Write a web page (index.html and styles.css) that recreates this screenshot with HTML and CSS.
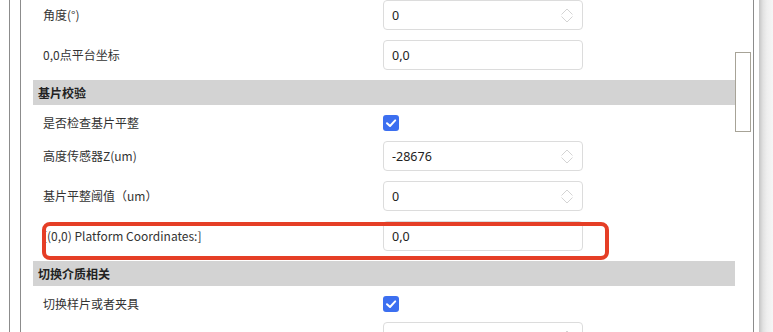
FILE: index.html
```html
<!DOCTYPE html>
<html lang="zh">
<head>
<meta charset="utf-8">
<link rel="stylesheet" href="styles.css">
</head>
<body>
<div class="window">
  <div class="gutter"></div>
  <div class="vline"></div>
  <div class="gap10"></div>
  <div class="vline"></div>
  <div class="pane">
    <div class="list">
      <div class="row">
        <div class="label">角度(°)</div>
        <div class="field"><span class="val">0</span><svg class="spin" width="12" height="15" viewBox="0 0 12 15"><polyline points="0.5,6.5 6,1 11.5,6.5"/><polyline points="0.5,8.5 6,14 11.5,8.5"/></svg></div>
      </div>
      <div class="row">
        <div class="label">0,0点平台坐标</div>
        <div class="field"><span class="val">0,0</span></div>
      </div>
      <div class="header">基片校验</div>
      <div class="row row-check">
        <div class="label">是否检查基片平整</div>
        <div class="check"><svg width="16" height="16" viewBox="0 0 16 16"><polyline points="4,8.2 7,11 12.2,5.4"/></svg></div>
      </div>
      <div class="row">
        <div class="label">高度传感器Z(um)</div>
        <div class="field"><span class="val">-28676</span><svg class="spin" width="12" height="15" viewBox="0 0 12 15"><polyline points="0.5,6.5 6,1 11.5,6.5"/><polyline points="0.5,8.5 6,14 11.5,8.5"/></svg></div>
      </div>
      <div class="row">
        <div class="label">基片平整阈值（um）</div>
        <div class="field"><span class="val">0</span><svg class="spin" width="12" height="15" viewBox="0 0 12 15"><polyline points="0.5,6.5 6,1 11.5,6.5"/><polyline points="0.5,8.5 6,14 11.5,8.5"/></svg></div>
      </div>
      <div class="row row-mark">
        <div class="label">[(0,0) Platform Coordinates:]</div>
        <div class="field"><span class="val">0,0</span></div>
        <div class="highlight"></div>
      </div>
      <div class="header">切换介质相关</div>
      <div class="row row-check">
        <div class="label">切换样片或者夹具</div>
        <div class="check"><svg width="16" height="16" viewBox="0 0 16 16"><polyline points="4,8.2 7,11 12.2,5.4"/></svg></div>
      </div>
      <div class="row">
        <div class="label"></div>
        <div class="field"><span class="val"></span><svg class="spin" width="12" height="15" viewBox="0 0 12 15"><polyline points="0.5,6.5 6,1 11.5,6.5"/><polyline points="0.5,8.5 6,14 11.5,8.5"/></svg></div>
      </div>
    </div>
  </div>
  <div class="scroll"><div class="thumb"></div></div>
  <div class="gap2"></div>
  <div class="vline"></div>
  <div class="gap5"></div>
  <div class="shadow"></div>
</div>
</body>
</html>
```
FILE: styles.css
```css
html, body {
  margin: 0;
  padding: 0;
  background: #ffffff;
}
body {
  width: 773px;
  height: 332px;
  overflow: hidden;
  font-family: "Noto Sans CJK SC", "Noto Sans", sans-serif;
  font-size: 12px;
  color: #333333;
}
.window {
  display: flex;
  height: 332px;
}
.gutter { flex: 0 0 9px; }
.vline { flex: 0 0 1px; background: #8c8c8c; }
.gap10 { flex: 0 0 10px; }
.gap2 { flex: 0 0 2px; }
.gap5 { flex: 0 0 5px; }
.pane {
  flex: 0 0 714px;
  box-sizing: border-box;
  padding-left: 12px;
  overflow: hidden;
}
.list {
  display: flex;
  flex-direction: column;
  gap: 10px;
}
.row {
  display: flex;
  align-items: center;
  height: 30px;
  flex: 0 0 auto;
}
.row-check { height: 16px; }
.row-mark { position: relative; }
.label {
  flex: 0 0 350px;
  box-sizing: border-box;
  padding-left: 10px;
  line-height: 16px;
  color: #333333;
  white-space: nowrap;
}
.field {
  flex: 0 0 200px;
  box-sizing: border-box;
  height: 30px;
  border: 1px solid #dcdcdc;
  border-radius: 4px;
  display: flex;
  align-items: center;
  justify-content: space-between;
  padding: 0 9px 0 8px;
  background: #fff;
}
.val {
  font-family: "Noto Sans", sans-serif;
  font-size: 12.5px;
  color: #222;
}
.spin {
  fill: none;
  stroke: #d4d4d4;
  stroke-width: 1;
}
.check {
  width: 16px;
  height: 16px;
  border-radius: 3px;
  background: #3c6ff0;
}
.check svg {
  display: block;
  fill: none;
  stroke: #ffffff;
  stroke-width: 2;
  stroke-linecap: round;
  stroke-linejoin: round;
}
.header {
  height: 25px;
  flex: 0 0 25px;
  background: #d3d3d3;
  font-weight: bold;
  color: #222;
  padding-left: 5px;
  display: flex;
  align-items: center;
}
.highlight {
  position: absolute;
  left: 9px;
  top: 1px;
  width: 567px;
  height: 38px;
  box-sizing: border-box;
  border: 4px solid #e53e26;
  border-radius: 8px;
  pointer-events: none;
}
.scroll {
  flex: 0 0 16px;
  padding-top: 52px;
  box-sizing: border-box;
}
.thumb {
  width: 16px;
  height: 80px;
  box-sizing: border-box;
  border: 1px solid #a7a397;
  background: #fff;
}
.shadow {
  flex: 0 0 14px;
  background: linear-gradient(to right, #c4c4c4 0px, #e2e2e2 4px, #efefef 8px, #f6f6f6 14px);
}
```
